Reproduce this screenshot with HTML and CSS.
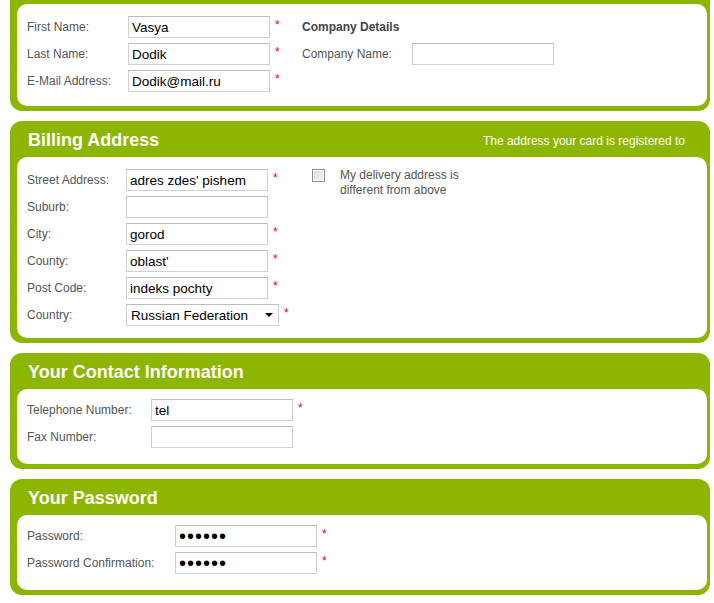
FILE: index.html
```html
<!DOCTYPE html>
<html>

<head>
    <meta charset="utf-8">
    <title>Create account</title>

    <link rel="stylesheet" href="styles.css">
</head>

<body>

    <form action="" id="account-form">

        <div class="box box-top">
            <div class="box-body box-body-top">
                <div class="col col-person">
                    <div class="row">
                        <label>First Name:</label>
                        <input type="text" class="field" value="Vasya">
                        <span class="req">*</span>
                    </div>
                    <div class="row">
                        <label>Last Name:</label>
                        <input type="text" class="field" value="Dodik">
                        <span class="req">*</span>
                    </div>
                    <div class="row">
                        <label>E-Mail Address:</label>
                        <input type="text" class="field" value="Dodik@mail.ru">
                        <span class="req">*</span>
                    </div>
                </div>
                <div class="col col-company">
                    <div class="row">
                        <span class="sub-title">Company Details</span>
                    </div>
                    <div class="row">
                        <label>Company Name:</label>
                        <input type="text" class="field" value="">
                    </div>
                </div>
            </div>
        </div>

        <div class="box">
            <div class="box-head">
                <h2>Billing Address</h2>
                <span class="head-note">The address your card is registered to</span>
            </div>
            <div class="box-body box-body-billing">
                <div class="col col-billing">
                    <div class="row">
                        <label>Street Address:</label>
                        <input type="text" class="field" value="adres zdes' pishem">
                        <span class="req">*</span>
                    </div>
                    <div class="row">
                        <label>Suburb:</label>
                        <input type="text" class="field" value="">
                    </div>
                    <div class="row">
                        <label>City:</label>
                        <input type="text" class="field" value="gorod">
                        <span class="req">*</span>
                    </div>
                    <div class="row">
                        <label>County:</label>
                        <input type="text" class="field" value="oblast'">
                        <span class="req">*</span>
                    </div>
                    <div class="row">
                        <label>Post Code:</label>
                        <input type="text" class="field" value="indeks pochty">
                        <span class="req">*</span>
                    </div>
                    <div class="row">
                        <label>Country:</label>
                        <span class="select-wrap">
                            <select class="field select">
                                <option>Russian Federation</option>
                            </select>
                        </span>
                        <span class="req">*</span>
                    </div>
                </div>
                <div class="col col-delivery">
                    <input type="checkbox" class="check" id="delivery">
                    <label for="delivery" class="check-label">My delivery address is<br>different from above</label>
                </div>
            </div>
        </div>

        <div class="box">
            <div class="box-head">
                <h2>Your Contact Information</h2>
            </div>
            <div class="box-body box-body-short">
                <div class="col col-contact">
                    <div class="row">
                        <label>Telephone Number:</label>
                        <input type="text" class="field" value="tel">
                        <span class="req">*</span>
                    </div>
                    <div class="row">
                        <label>Fax Number:</label>
                        <input type="text" class="field" value="">
                    </div>
                </div>
            </div>
        </div>

        <div class="box">
            <div class="box-head">
                <h2>Your Password</h2>
            </div>
            <div class="box-body box-body-short">
                <div class="col col-password">
                    <div class="row">
                        <label>Password:</label>
                        <input type="password" class="field" value="123456">
                        <span class="req">*</span>
                    </div>
                    <div class="row">
                        <label>Password Confirmation:</label>
                        <input type="password" class="field" value="123456">
                        <span class="req">*</span>
                    </div>
                </div>
            </div>
        </div>

    </form>

</body>

</html>
```

FILE: styles.css
```css
body {
    margin: 0;
    background: #fff;
    font-family: "Liberation Sans", Arial, sans-serif;
    font-size: 12px;
    color: #555;
}

#account-form {
    width: 700px;
    margin-left: 10px;
}

.box {
    background: #8db600;
    border-radius: 12px;
    padding: 0 3px 5px 7px;
    margin-bottom: 10px;
}

.box-top {
    border-radius: 0 0 12px 12px;
    padding-top: 4px;
}

.box-head {
    height: 36px;
    display: flex;
    align-items: center;
    justify-content: space-between;
    padding: 0 22px 0 11px;
}

.box-head h2 {
    margin: 0;
    font-size: 18px;
    font-weight: bold;
    color: #fff;
    position: relative;
    top: 1px;
}

.head-note {
    color: #fff;
    font-size: 12px;
    position: relative;
    top: 2px;
}

.box-body {
    background: #fff;
    border-radius: 10px;
    padding: 12px 10px 15px 10px;
    display: flex;
}

.box-body-top {
    padding-bottom: 14px;
}

.box-body-billing {
    padding-bottom: 12px;
}

.box-body-short {
    padding-top: 10px;
    padding-bottom: 16px;
}

.col {
    display: flex;
    flex-direction: column;
    gap: 5px;
}

.row {
    display: flex;
    align-items: center;
    height: 22px;
}

.row label {
    flex: none;
}

.col-person label {
    width: 101px;
}

.col-person {
    width: 275px;
}

.col-company label {
    width: 110px;
}

.col-billing label {
    width: 99px;
}

.col-billing {
    width: 285px;
}

.col-contact label {
    width: 124px;
}

.col-password label {
    width: 148px;
}

.sub-title {
    font-weight: bold;
    color: #444;
}

.field {
    box-sizing: border-box;
    width: 142px;
    height: 22px;
    margin: 0;
    padding: 1px 3px 0 3px;
    border: 1px solid #d0d0d0;
    border-top-color: #bdbdbd;
    background: #fff;
    font-family: "Liberation Sans", Arial, sans-serif;
    font-size: 13.5px;
    color: #000;
    outline: none;
}

input[type="password"] {
    font-size: 20px;
    letter-spacing: 1px;
    padding-top: 0;
}

.select-wrap {
    position: relative;
    display: inline-block;
    height: 22px;
}

.select {
    -webkit-appearance: none;
    appearance: none;
    width: 153px;
    height: 22px;
    padding: 1px 3px 0 4px;
    border-radius: 0;
}

.select-wrap::after {
    content: "";
    position: absolute;
    right: 6px;
    top: 9px;
    border-left: 4px solid transparent;
    border-right: 4px solid transparent;
    border-top: 4px solid #000;
}

.req {
    color: #e3001b;
    margin-left: 5px;
    font-size: 12px;
    position: relative;
    top: -2px;
}

.col-delivery {
    flex-direction: row;
    align-items: flex-start;
    gap: 0;
}

.check {
    -webkit-appearance: none;
    appearance: none;
    width: 13px;
    height: 13px;
    margin: 0 15px 0 0;
    box-sizing: border-box;
    border: 1px solid #8e8e8e;
    background: linear-gradient(135deg, #dcdcdc, #f4f4f4);
    box-shadow: inset 0 0 0 1px #fff;
}

.check-label {
    line-height: 15px;
    margin-top: -1px;
}
```
